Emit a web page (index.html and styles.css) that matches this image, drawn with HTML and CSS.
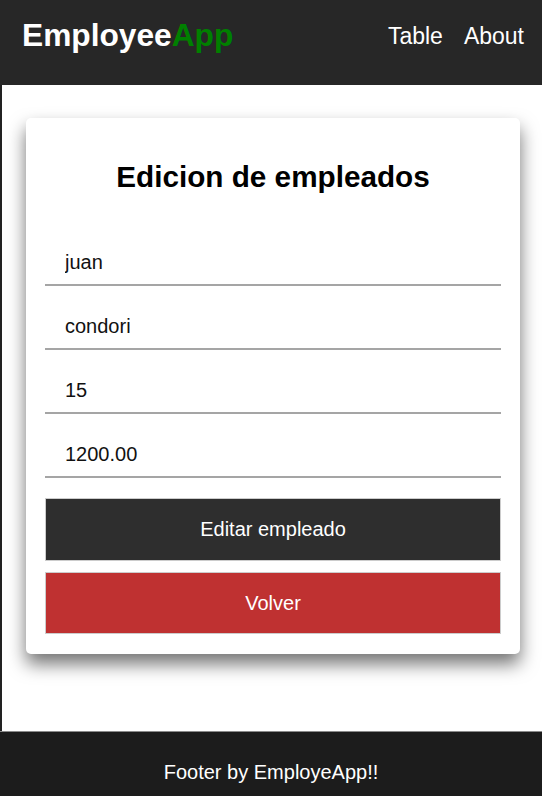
FILE: index.html
```html
<!DOCTYPE html>
<html lang="es">
<head>
<meta charset="utf-8">
<title>EmployeeApp</title>
<link rel="stylesheet" href="styles.css">
</head>
<body>
<header class="topbar">
  <div class="logo">Employee<span class="logo-accent">App</span></div>
  <nav class="nav">
    <a class="nav-link" href="#">Table</a>
    <a class="nav-link" href="#">About</a>
  </nav>
</header>
<main class="main">
  <section class="card">
    <h2 class="card-title">Edicion de empleados</h2>
    <form class="form">
      <input class="field" type="text" value="juan">
      <input class="field" type="text" value="condori">
      <input class="field" type="text" value="15">
      <input class="field" type="text" value="1200.00">
      <button class="btn btn-dark" type="button">Editar empleado</button>
      <button class="btn btn-red" type="button">Volver</button>
    </form>
  </section>
</main>
<footer class="footer">Footer by EmployeApp!!</footer>
</body>
</html>
```
FILE: styles.css
```css
html, body {
  margin: 0;
  padding: 0;
}
body {
  font-family: "Liberation Sans", Arial, sans-serif;
  background: #fff;
  overflow: hidden;
}
.topbar {
  height: 85px;
  box-sizing: border-box;
  background: #272727;
  display: flex;
  justify-content: space-between;
  align-items: flex-start;
  padding: 17px 18px 0 22px;
}
.logo {
  font-size: 31.7px;
  font-weight: bold;
  color: #fff;
}
.logo-accent {
  color: #008000;
}
.nav {
  display: flex;
  gap: 21px;
  padding-top: 6px;
}
.nav-link {
  color: #fff;
  font-size: 23px;
  text-decoration: none;
}
.main {
  height: 646px;
  box-sizing: border-box;
  border-left: 2px solid #222;
  padding: 33px 22px 0 24px;
}
.card {
  background: #fff;
  border-radius: 5px;
  box-shadow: 0 10px 18px rgba(0, 0, 0, 0.55);
  padding: 20px 19px;
}
.card-title {
  margin: 22px 0 47px;
  text-align: center;
  font-size: 29.7px;
  font-weight: bold;
  color: #000;
}
.form {
  display: flex;
  flex-direction: column;
}
.field {
  font-family: "Liberation Sans", Arial, sans-serif;
  font-size: 20px;
  color: #111;
  border: none;
  border-bottom: 2px solid #a5a5a5;
  padding: 10px 20px;
  margin: 0 0 19px;
  outline: none;
  background: transparent;
}
.field:nth-of-type(4) {
  margin-bottom: 20px;
}
.btn {
  font-family: "Liberation Sans", Arial, sans-serif;
  font-size: 20px;
  color: #fff;
  height: 63px;
  border: 1px solid rgba(0, 0, 0, 0.2);
  background-clip: padding-box;
  cursor: pointer;
}
.btn-dark {
  background-color: #2e2e2e;
  margin-bottom: 11px;
}
.btn-red {
  background-color: #bf3131;
  height: 62px;
}
.footer {
  height: 65px;
  box-sizing: border-box;
  background: #1c1c1c;
  border-top: 1px solid #8a8a8a;
  color: #fff;
  font-size: 20px;
  text-align: center;
  padding-top: 29px;
}
```
